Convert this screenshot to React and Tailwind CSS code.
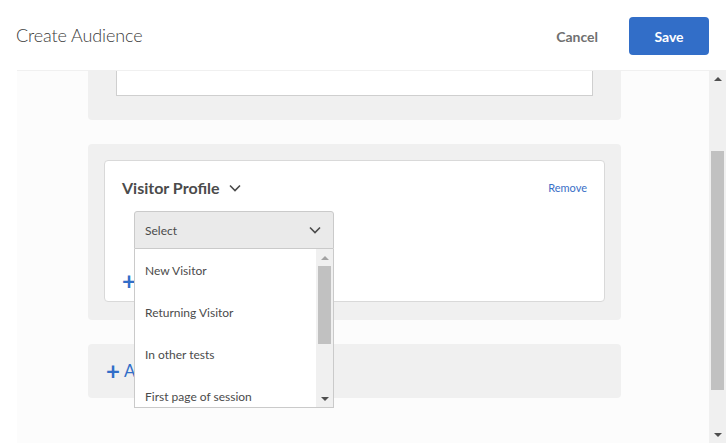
import React from 'react';

const font = { fontFamily: 'Lato, "Open Sans", sans-serif' };

const Chevron = ({ className = '' }) => (
    <svg viewBox="0 0 12 8" className={className} fill="none" stroke="currentColor" strokeWidth="1.6">
        <path d="M1 1.5l5 5 5-5" />
    </svg>
);

const Arrow = ({ down }) => (
    <svg viewBox="0 0 8 4" className="w-[8px] h-[4px]" fill="#4f4f4f">
        {down ? <path d="M0 0h8L4 4z" /> : <path d="M0 4h8L4 0z" />}
    </svg>
);

const ScrollBar = ({ thumbTop, thumbHeight, light }) => (
    <div className="w-[17px] h-full flex flex-col bg-[#f0f0f0]">
        <div className="h-[17px] flex items-center justify-center">
            <svg viewBox="0 0 8 4" className="w-[8px] h-[4px]" fill={light ? '#a3a3a3' : '#4f4f4f'}>
                <path d="M0 4h8L4 0z" />
            </svg>
        </div>
        <div className="flex-1 px-[2px]">
            <div className="bg-[#c1c1c1]" style={{ marginTop: thumbTop, height: thumbHeight }}></div>
        </div>
        <div className="h-[17px] flex items-center justify-center">
            <Arrow down />
        </div>
    </div>
);

const options = ['New Visitor', 'Returning Visitor', 'In other tests', 'First page of session'];

export default function App() {
    return (
        <div className="w-[726px] h-[443px] bg-white overflow-hidden text-[#4b4b4b]" style={font}>
            {/* Header */}
            <div className="h-[70px] flex items-center pl-4 pr-[17px]">
                <h1 className="text-[18px] font-light text-[#3c3c3c] flex-1 tracking-[-0.1px]">Create Audience</h1>
                <button className="text-[14px] font-bold text-[#707070] mr-[31px] mt-[2px]">Cancel</button>
                <button className="w-[80px] h-[38px] rounded-[4px] bg-[#326ec8] text-white text-[14px] font-bold mt-[2px]">
                    Save
                </button>
            </div>

            {/* Body */}
            <div className="flex h-[373px]">
                <div className="flex-1 bg-[#fcfcfc] border-t border-[#f0f0f0] ml-[17px] overflow-hidden relative">
                    <div className="ml-[71px] w-[533px]">
                        {/* top panel (scrolled) */}
                        <div className="h-[49px] bg-[#f0f0f0] rounded-b-[4px] px-[28px]">
                            <div className="h-[25px] bg-white border-x border-b border-[#cfcfcf]"></div>
                        </div>

                        {/* Visitor Profile panel */}
                        <div className="mt-[24px] bg-[#f0f0f0] rounded-[4px] pt-[16px] pb-[18px] px-[16px]">
                            <div className="h-[142px] bg-white border border-[#d9d9d9] rounded-[4px] px-[17px] pt-[15px]">
                                <div className="flex items-center">
                                    <span className="text-[16px] font-bold text-[#4b4b4b]">Visitor Profile</span>
                                    <Chevron className="w-[12px] h-[8px] ml-[9px] text-[#4b4b4b]" />
                                    <span className="ml-auto text-[11px] text-[#3a6fc7]">Remove</span>
                                </div>
                                <div className="mt-[69px] flex items-center text-[#326ec8]">
                                    <span className="text-[24px] leading-none font-bold">+</span>
                                </div>
                            </div>
                        </div>

                        {/* Add panel */}
                        <div className="mt-[24px] h-[54px] bg-[#f0f0f0] rounded-[4px] flex items-center pl-[18px] text-[#326ec8]">
                            <span className="text-[24px] leading-none font-bold">+</span>
                            <span className="ml-[4px] text-[17px]">Add Rule</span>
                        </div>
                    </div>

                    {/* Select dropdown */}
                    <div className="absolute left-[117px] top-[140px] w-[200px]">
                        <div className="h-[38px] bg-[#eaeaea] border border-[#cacaca] rounded-t-[3px] flex items-center pl-[10px] pr-[12px]">
                            <span className="text-[12px] text-[#4b4b4b] flex-1 mt-[1px]">Select</span>
                            <Chevron className="w-[12px] h-[8px] text-[#4b4b4b]" />
                        </div>
                        <div className="h-[159px] bg-white border-x border-b border-[#cacaca] flex overflow-hidden">
                            <div className="flex-1">
                                {options.map((o) => (
                                    <div key={o} className="h-[42px] flex items-center pl-[10px] pt-[1px] text-[12px] text-[#4b4b4b]">
                                        {o}
                                    </div>
                                ))}
                            </div>
                            <ScrollBar thumbTop={0} thumbHeight={78} light />
                        </div>
                    </div>
                </div>
                <ScrollBar thumbTop={64} thumbHeight={239} />
            </div>
        </div>
    );
}
